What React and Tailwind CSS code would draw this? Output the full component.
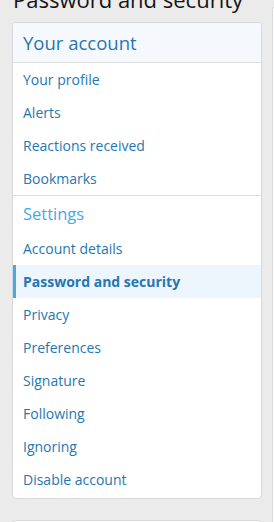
export default function App() {
  const account = ["Your profile", "Alerts", "Reactions received", "Bookmarks"];
  const settings = [
    "Account details",
    "Password and security",
    "Privacy",
    "Preferences",
    "Signature",
    "Following",
    "Ignoring",
    "Disable account",
  ];
  const active = "Password and security";

  return (
    <div className="h-[522px] w-[274px] overflow-hidden bg-[#ebebeb] font-['Open_Sans',sans-serif]">
      <div className="relative h-full">
        <h1 className="mt-[-16px] ml-[13px] whitespace-nowrap text-[22px] leading-[30px] text-[#141414]">
          Password and security
        </h1>
        <div className="absolute left-[272px] top-[22px] h-[600px] w-[20px] rounded border border-[#d8d8d8] bg-[#fefefe]" />
        <div className="mt-[8px] ml-[12px] w-[250px] overflow-hidden rounded-[4px] border border-[#d8d8d8] bg-white">
          <div className="flex h-[40px] items-center border-b border-[#dfdfdf] bg-[#f5f9fe] px-[10px] text-[18.5px] text-[#2577b1]">
            Your account
          </div>
          {account.map((t) => (
            <div key={t} className="flex h-[33px] items-center px-[10px] text-[14px] text-[#2577b1]">
              {t}
            </div>
          ))}
          <div className="border-t border-[#dfdfdf]" />
          <div className="flex h-[36px] items-center px-[10px] text-[16.5px] text-[#47a7eb]">
            Settings
          </div>
          {settings.map((t) =>
            t === active ? (
              <div
                key={t}
                className="flex h-[33px] items-center border-l-[3px] border-[#47a7eb] bg-[#edf6fd] pl-[7px] pr-[10px] text-[14px] font-bold text-[#2577b1]"
              >
                {t}
              </div>
            ) : (
              <div key={t} className="flex h-[33px] items-center px-[10px] text-[14px] text-[#2577b1]">
                {t}
              </div>
            )
          )}
          <div className="h-[2px]" />
        </div>
        <div className="mt-[21px] ml-[12px] h-[40px] w-[250px] rounded-[4px] border border-[#d8d8d8] bg-white" />
      </div>
    </div>
  );
}
